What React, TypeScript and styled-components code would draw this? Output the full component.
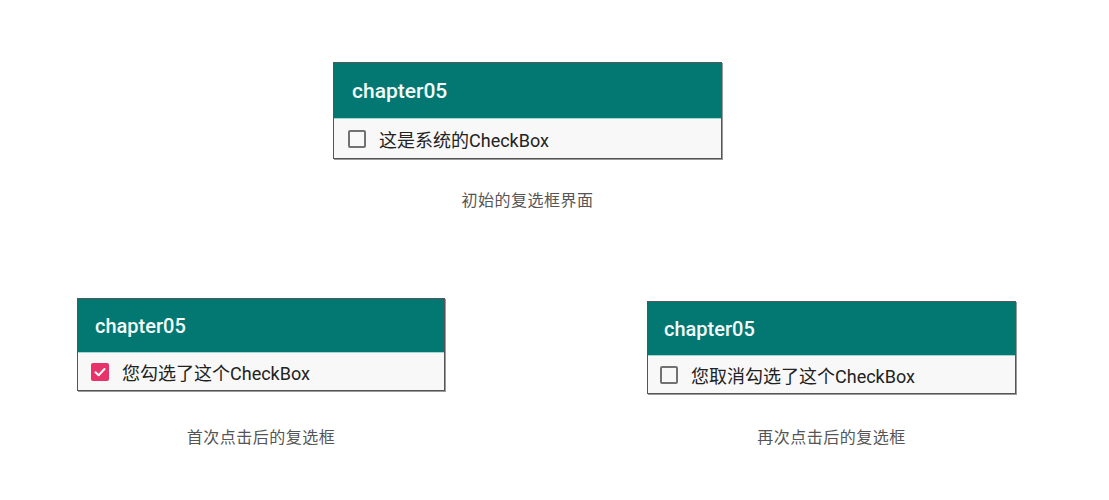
import React from "react";
import styled, { createGlobalStyle } from "styled-components";

const Global = createGlobalStyle`
  html, body { margin: 0; padding: 0; background: #ffffff; }
  body { font-family: Roboto, "Noto Sans CJK SC", sans-serif; width: 1109px; height: 500px; overflow: hidden; }
`;

const Page = styled.div`
  display: flex;
  flex-direction: column;
  width: 1109px;
  height: 500px;
`;

const TopRow = styled.div`
  display: flex;
  padding: 62px 0 0 333px;
`;

const BottomRow = styled.div`
  display: flex;
  align-items: flex-start;
  padding-left: 77px;
  margin-top: 88px;
`;

const Column = styled.div<{ $top?: number; $left?: number; $gap: number }>`
  display: flex;
  flex-direction: column;
  align-items: center;
  margin-top: ${(p) => p.$top ?? 0}px;
  margin-left: ${(p) => p.$left ?? 0}px;
  gap: ${(p) => p.$gap}px;
`;

const Panel = styled.div<{ $w: number; $h: number }>`
  width: ${(p) => p.$w}px;
  height: ${(p) => p.$h}px;
  box-sizing: border-box;
  border: 1px solid #555;
  box-shadow: 1px 1px 0 #9a9a9a;
  display: flex;
  flex-direction: column;
  background: #f8f8f8;
`;

const Header = styled.div<{ $h: number; $pad: number; $fs: number }>`
  height: ${(p) => p.$h}px;
  flex-shrink: 0;
  box-sizing: border-box;
  background: #037873;
  border-bottom: 1px solid #9fd8d3;
  display: flex;
  align-items: center;
  padding-left: ${(p) => p.$pad}px;
  color: #f4fbfa;
  font-family: Roboto, sans-serif;
  font-weight: 500;
  font-size: ${(p) => p.$fs}px;
`;

const Body = styled.div<{ $pad: number }>`
  flex: 1;
  display: flex;
  align-items: center;
  padding-left: ${(p) => p.$pad}px;
  padding-top: 1px;
  gap: 13px;
  color: #222;
  font-family: Roboto, "Noto Sans CJK SC", sans-serif;
  font-size: 18px;
`;

const Box = styled.span<{ $checked?: boolean }>`
  width: 18px;
  height: 18px;
  box-sizing: border-box;
  border-radius: 2px;
  border: ${(p) => (p.$checked ? "none" : "2px solid #727272")};
  background: ${(p) => (p.$checked ? "#e8336a" : "transparent")};
  display: flex;
  align-items: center;
  justify-content: center;
  flex-shrink: 0;
`;

const Caption = styled.div`
  font-family: "Noto Sans CJK SC", sans-serif;
  font-size: 16px;
  line-height: 22px;
  letter-spacing: 0.5px;
  color: #555;
`;

const Check = ({ checked }: { checked?: boolean }) => (
  <Box $checked={checked}>
    {checked && (
      <svg width="14" height="14" viewBox="0 0 14 14">
        <path d="M2.5 7.3 L5.6 10.2 L11.5 4" fill="none" stroke="#fff" strokeWidth="2" strokeLinecap="round" strokeLinejoin="round" />
      </svg>
    )}
  </Box>
);

export default function App() {
  return (
    <Page>
      <Global />
      <TopRow>
        <Column $gap={29}>
          <Panel $w={389} $h={97}>
            <Header $h={56} $pad={18} $fs={21}>chapter05</Header>
            <Body $pad={14}>
              <Check />
              <span>这是系统的CheckBox</span>
            </Body>
          </Panel>
          <Caption>初始的复选框界面</Caption>
        </Column>
      </TopRow>
      <BottomRow>
        <Column $gap={34}>
          <Panel $w={368} $h={93}>
            <Header $h={54} $pad={17} $fs={20}>chapter05</Header>
            <Body $pad={13}>
              <Check checked />
              <span>您勾选了这个CheckBox</span>
            </Body>
          </Panel>
          <Caption>首次点击后的复选框</Caption>
        </Column>
        <Column $top={3} $left={202} $gap={31}>
          <Panel $w={369} $h={93}>
            <Header $h={54} $pad={16} $fs={20}>chapter05</Header>
            <Body $pad={12}>
              <Check />
              <span>您取消勾选了这个CheckBox</span>
            </Body>
          </Panel>
          <Caption>再次点击后的复选框</Caption>
        </Column>
      </BottomRow>
    </Page>
  );
}
